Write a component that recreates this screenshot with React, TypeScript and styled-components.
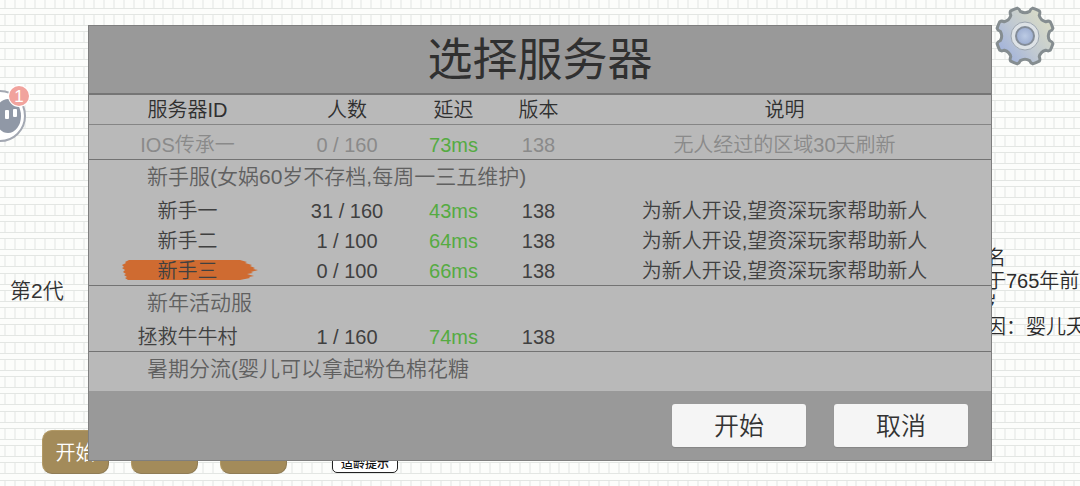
import React from "react";
import styled, { createGlobalStyle } from "styled-components";

const GlobalStyle = createGlobalStyle`
  *, *::before, *::after { box-sizing: border-box; }
  body {
    margin: 0;
    background: #fcfdfb;
    font-family: "Liberation Sans", "Noto Sans CJK SC", sans-serif;
    font-weight: 350;
    color: #333;
  }
`;

const Page = styled.div`
  display: grid;
  min-height: 100vh;
  overflow: hidden;
`;

/* The game scene and the dialog share the one grid cell, stacked. */
const Layer = styled.div`
  grid-area: 1 / 1;
  min-width: 0;
`;

const PaperLayer = styled(Layer)`
  position: relative;
`;

const PaperSvg = styled.svg`
  position: absolute;
  inset: 0;
  width: 100%;
  height: 100%;
`;

const Scene = styled(Layer)`
  position: relative;
  display: flex;
  flex-direction: column;
  justify-content: space-between;
  overflow: hidden;
`;

const SceneBody = styled.div`
  display: flex;
  justify-content: space-between;
`;

const LeftRail = styled.div`
  display: flex;
  flex-direction: column;
  gap: 132px;
  padding-top: 84px;
`;

const RightRail = styled.div`
  display: flex;
  flex-direction: column;
  gap: 176px;
  width: 114px;
  padding-top: 4px;
`;

const IconButton = styled.button`
  display: block;
  align-self: flex-start;
  padding: 0;
  border: 0;
  background: none;
`;

const GearButton = styled(IconButton)`
  align-self: flex-end;
  margin-right: 23px;
`;

const Generation = styled.div`
  padding-left: 10px;
  font-size: 21px;
  line-height: 24px;
`;

const LifeNotes = styled.div`
  font-size: 20px;
  line-height: 23px;
  color: #2c2c2c;
  white-space: nowrap;
`;

const BottomBar = styled.div`
  display: flex;
  align-items: flex-end;
  gap: 22px;
  padding: 0 42px 12px;
`;

const SceneButton = styled.button`
  width: 67px;
  height: 44px;
  padding: 0 0 2px;
  border: 1px solid #b39a66;
  border-right-color: #8f7c55;
  border-bottom-color: #8f7c55;
  border-radius: 10px;
  background: #a38b5a;
  color: #fff;
  font: 350 20px "Liberation Sans", "Noto Sans CJK SC", sans-serif;
`;

const AgeNotice = styled.div`
  height: 20px;
  margin: 0 0 1px 23px;
  padding: 0 8px;
  border: 1px solid #222;
  border-radius: 5px;
  background: #fff;
  color: #111;
  font-size: 12px;
  line-height: 20px;
  font-weight: 500;
`;

const DialogLayer = styled(Layer)`
  position: relative;
  display: flex;
  align-items: center;
  padding: 24px 88px;
`;

const Dialog = styled.section`
  flex: 1;
  min-width: 0;
  border: 1px solid #7f7f7f;
  background: #b9b9b9;
`;

const Title = styled.h1`
  margin: 0;
  padding: 3px 0 0;
  border-bottom: 2px solid #757575;
  background: #999;
  color: #303030;
  font-size: 45px;
  line-height: 64px;
  font-weight: 400;
  text-align: center;
`;

const ServerTable = styled.table`
  width: 100%;
  border-spacing: 0;
  table-layout: fixed;
  font-size: 20px;
  line-height: 24px;
  text-align: center;
`;

const Col = styled.col<{ $width?: number }>`
  width: ${(p) => (p.$width ? `${p.$width}px` : "auto")};
`;

const HeadCell = styled.th`
  height: 30px;
  padding: 0;
  border-bottom: 1px solid #858585;
  color: #303030;
  font-weight: 350;
`;

const Group = styled.tbody<{ $open?: boolean }>`
  & > tr:last-child > * {
    border-bottom: ${(p) => (p.$open ? "0" : "1px solid #737373")};
  }
`;

const GroupHeading = styled.th<{ $tall?: boolean }>`
  height: ${(p) => (p.$tall ? 39 : 36)}px;
  padding: 5px 58px 0;
  color: #606060;
  font-size: 21px;
  font-weight: 350;
  text-align: left;
  vertical-align: top;
`;

const ServerRow = styled.tr<{ $disabled?: boolean }>`
  color: ${(p) => (p.$disabled ? "#8a8a8a" : "#404040")};
  & > * {
    position: relative;
    height: ${(p) => (p.$disabled ? 35 : 30)}px;
    padding: ${(p) => (p.$disabled ? "5px 0 0" : "0")};
    font-weight: 350;
  }
`;

const ServerName = styled.span`
  position: relative;
`;

const Ping = styled.td`
  color: #55ab42;
`;

const BrushSvg = styled.svg`
  position: absolute;
  left: 33px;
  top: 3px;
`;

const Footer = styled.footer`
  display: flex;
  justify-content: flex-end;
  gap: 28px;
  padding: 13px 23px;
  background: #999;
`;

const DialogButton = styled.button`
  width: 134px;
  height: 43px;
  padding: 0 0 3px;
  border: 0;
  border-radius: 3px;
  background: #f5f5f5;
  box-shadow: 0 1px 1px #858585;
  color: #333;
  font: 350 25px "Liberation Sans", "Noto Sans CJK SC", sans-serif;
`;

const cellXs = [4, 14, 24, 34, 44, 54, 63, 73, 83, 93];
const rowYs = [14, 31, 48, 66];

function Paper() {
  return (
    <PaperSvg aria-hidden="true">
      <defs>
        <pattern id="paper" width="99" height="69" patternUnits="userSpaceOnUse">
          {rowYs.map((y) => (
            <g key={y}>
              {cellXs.map((x) => (
                <g key={x} fill="#eff1ef">
                  <rect x={x} y={y} width="2" height="11" />
                  {y + 11 > 69 && <rect x={x} y="0" width="2" height={y + 11 - 69} />}
                </g>
              ))}
              <rect x="0" y={y % 69} width="99" height="1" fill="#e3e6e3" />
              <rect x="0" y={(y + 11) % 69} width="99" height="1" fill="#e3e6e3" />
            </g>
          ))}
        </pattern>
      </defs>
      <rect width="100%" height="100%" fill="url(#paper)" />
    </PaperSvg>
  );
}

const point = (r: number, deg: number) => {
  const a = (deg * Math.PI) / 180;
  return `${(32 + r * Math.cos(a)).toFixed(1)} ${(32 + r * Math.sin(a)).toFixed(1)}`;
};

const gearPath =
  Array.from({ length: 8 }, (_, k) => {
    const c = 22.5 + k * 45;
    return (
      `${k ? "L" : "M"}${point(25, c - 12)} Q${point(28, c - 11)} ${point(29, c - 7)} ` +
      `Q${point(29, c)} ${point(29, c + 7)} Q${point(28, c + 11)} ${point(25, c + 12)} ` +
      `Q${point(22, c + 22.5)} ${point(25, c + 33)}`
    );
  }).join(" ") + " Z";

function Gear() {
  return (
    <svg width="64" height="64" viewBox="0 0 64 64" aria-hidden="true">
      <defs>
        <linearGradient id="gearFill" x1="0.15" y1="0.8" x2="0.85" y2="0.25">
          <stop offset="0" stopColor="#a5b5da" />
          <stop offset="0.45" stopColor="#c0c9d2" />
          <stop offset="1" stopColor="#d6d9c8" />
        </linearGradient>
        <radialGradient id="gearHub">
          <stop offset="0" stopColor="#bccbe4" />
          <stop offset="1" stopColor="#9cadd0" />
        </radialGradient>
      </defs>
      <path d={gearPath} fill="url(#gearFill)" stroke="#858d90" strokeWidth="3" strokeLinejoin="round" />
      <circle cx="32" cy="32" r="14" fill="#dde2e6" stroke="#9da6b0" strokeWidth="1" />
      <circle cx="32" cy="32" r="9" fill="url(#gearHub)" stroke="#838c98" strokeWidth="2" />
    </svg>
  );
}

function Avatar() {
  return (
    <svg width="32" height="60" viewBox="0 0 32 60" aria-hidden="true">
      <circle cx="0" cy="32" r="25" fill="#fff" stroke="#a3a8b2" strokeWidth="2" />
      <ellipse cx="8" cy="32" rx="13" ry="17" fill="#9098a6" />
      <rect x="5" y="26" width="4" height="9" rx="1" fill="#fff" />
      <rect x="13" y="25" width="4" height="8" rx="1" fill="#fff" />
      <circle cx="19" cy="12" r="11" fill="#fff" />
      <circle cx="19" cy="12" r="10" fill="#f1a39d" />
      <text x="19" y="18" textAnchor="middle" fontSize="17" fill="#fff" fontFamily="Liberation Sans, sans-serif">
        1
      </text>
    </svg>
  );
}

function Brush() {
  return (
    <BrushSvg width="136" height="22" viewBox="0 0 136 22" aria-hidden="true">
      <path
        fill="#cf6b31"
        d="M7 1 L118 1 L125 3 L123 4 L130 6 L128 7 L133 9 L131 10 L136 11 L129 13 L131 14 L125 15 L132 17 L127 18 L128 19 L118 21 L6 21 L3 19 L5 18 L2 16 L4 15 L1 13 L3 11 L0 9 L2 8 L0 6 L4 4 L3 3 Z"
      />
    </BrushSvg>
  );
}

type Server = {
  name: string;
  players: string;
  ping: string;
  version: string;
  note: string;
  disabled?: boolean;
  selected?: boolean;
};

const newcomerNote = "为新人开设,望资深玩家帮助新人";

const groups: { heading?: string; servers: Server[] }[] = [
  {
    servers: [
      { name: "IOS传承一", players: "0 / 160", ping: "73ms", version: "138", note: "无人经过的区域30天刷新", disabled: true },
    ],
  },
  {
    heading: "新手服(女娲60岁不存档,每周一三五维护)",
    servers: [
      { name: "新手一", players: "31 / 160", ping: "43ms", version: "138", note: newcomerNote },
      { name: "新手二", players: "1 / 100", ping: "64ms", version: "138", note: newcomerNote },
      { name: "新手三", players: "0 / 100", ping: "66ms", version: "138", note: newcomerNote, selected: true },
    ],
  },
  {
    heading: "新年活动服",
    servers: [{ name: "拯救牛牛村", players: "1 / 160", ping: "74ms", version: "138", note: "" }],
  },
  { heading: "暑期分流(婴儿可以拿起粉色棉花糖", servers: [] },
];

const columns = ["服务器ID", "人数", "延迟", "版本", "说明"];

export default function App() {
  return (
    <Page>
      <GlobalStyle />
      <PaperLayer>
        <Paper />
      </PaperLayer>
      <Scene>
        <SceneBody>
          <LeftRail>
            <IconButton aria-label="角色">
              <Avatar />
            </IconButton>
            <Generation>第2代</Generation>
          </LeftRail>
          <RightRail>
            <GearButton aria-label="设置">
              <Gear />
            </GearButton>
            <LifeNotes>
              <div>姓名</div>
              <div>死于765年前</div>
              <div>0岁</div>
              <div>死因：婴儿夭</div>
            </LifeNotes>
          </RightRail>
        </SceneBody>
        <BottomBar>
          <SceneButton>开始</SceneButton>
          <SceneButton aria-label="菜单二" />
          <SceneButton aria-label="菜单三" />
          <AgeNotice>适龄提示</AgeNotice>
        </BottomBar>
      </Scene>
      <DialogLayer>
        <Dialog role="dialog" aria-labelledby="dialog-title">
          <Title id="dialog-title">选择服务器</Title>
          <ServerTable>
            <colgroup>
              <Col $width={197} />
              <Col $width={122} />
              <Col $width={91} />
              <Col $width={79} />
              <Col />
            </colgroup>
            <thead>
              <tr>
                {columns.map((c) => (
                  <HeadCell key={c} scope="col">
                    {c}
                  </HeadCell>
                ))}
              </tr>
            </thead>
            {groups.map((group, i) => (
              <Group key={i} $open={group.servers.length === 0}>
                {group.heading && (
                  <tr>
                    <GroupHeading colSpan={5} scope="rowgroup" $tall={group.servers.length === 0}>
                      {group.heading}
                    </GroupHeading>
                  </tr>
                )}
                {group.servers.map((s) => (
                  <ServerRow key={s.name} $disabled={s.disabled}>
                    <th scope="row">
                      {s.selected && <Brush />}
                      <ServerName>{s.name}</ServerName>
                    </th>
                    <td>{s.players}</td>
                    <Ping>{s.ping}</Ping>
                    <td>{s.version}</td>
                    <td>{s.note}</td>
                  </ServerRow>
                ))}
              </Group>
            ))}
          </ServerTable>
          <Footer>
            <DialogButton>开始</DialogButton>
            <DialogButton>取消</DialogButton>
          </Footer>
        </Dialog>
      </DialogLayer>
    </Page>
  );
}
